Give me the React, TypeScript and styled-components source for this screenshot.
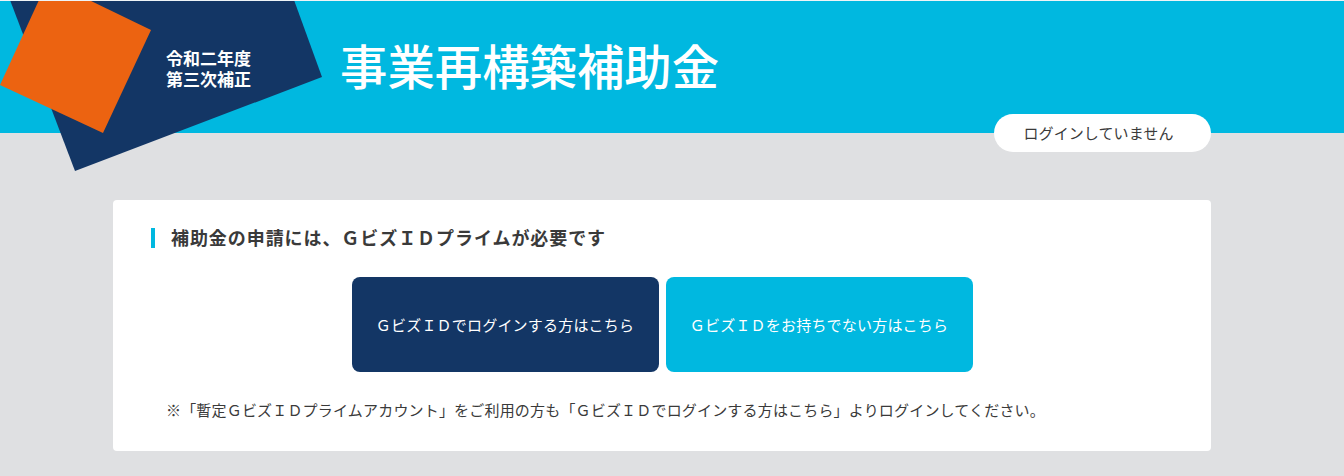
import React, { FC } from 'react';
import styled, { createGlobalStyle } from 'styled-components';

const GlobalStyle = createGlobalStyle`
  html, body {
    margin: 0;
    padding: 0;
    background: #dfe0e2;
  }

  body {
    font-family: "Noto Sans CJK JP", "Noto Sans", sans-serif;
    color: #3a3a3a;
  }
`;

const Page = styled.div`
  width: 1344px;
  height: 476px;
  box-sizing: border-box;
  border-top: 1px solid #eef4f7;
  overflow: hidden;
`;

const Header = styled.header`
  position: relative;
  height: 132px;
  box-sizing: border-box;
  padding-left: 166px;
  display: flex;
  align-items: center;
  background: #00b8e0;
`;

const Emblem = styled.svg`
  position: absolute;
  left: 0;
  top: 0;
`;

const Period = styled.div`
  position: relative;
  width: 174px;
  flex: none;
  margin-top: 1px;
  font-size: 17px;
  line-height: 21px;
  font-weight: 700;
  color: #fff;
`;

const Title = styled.h1`
  margin: 0 0 4px;
  font-size: 47.4px;
  line-height: 1;
  font-weight: 500;
  color: #fff;
  position: relative;
`;

const LoginState = styled.div`
  position: absolute;
  right: 133px;
  top: 113px;
  width: 217px;
  height: 38px;
  box-sizing: border-box;
  padding: 0 8px 2px 0;
  display: flex;
  align-items: center;
  justify-content: center;
  border-radius: 19px;
  background: #fff;
  font-size: 15px;
  letter-spacing: 0.1px;
  color: #3a3a3a;
`;

const Main = styled.main`
  padding: 67px 133px 0 113px;
`;

const Card = styled.section`
  height: 251px;
  box-sizing: border-box;
  padding: 28px 38px 0;
  border-radius: 4px;
  background: #fff;
`;

const Heading = styled.h2`
  margin: 0;
  padding: 0 0 2px 16px;
  height: 20px;
  box-sizing: border-box;
  border-left: 4px solid #00b8e0;
  font-size: 18px;
  line-height: 18px;
  font-weight: 700;
  letter-spacing: 0.93px;
  color: #3a3a3a;
`;

const Actions = styled.div`
  margin-top: 29px;
  display: flex;
  justify-content: center;
  gap: 7px;
`;

const ActionButton = styled.a<{ $primary?: boolean }>`
  width: 307px;
  height: 95px;
  display: flex;
  align-items: center;
  justify-content: center;
  border-radius: 8px;
  background: ${({ $primary }) => ($primary ? '#133665' : '#00b8e0')};
  font-size: 15px;
  letter-spacing: 0.2px;
  color: #fff;
`;

const Note = styled.p`
  margin: 28px 0 0 15px;
  font-size: 15px;
  line-height: 20px;
  letter-spacing: 0.18px;
  white-space: nowrap;
  color: #3a3a3a;
`;

const App: FC = () => (
  <Page>
    <GlobalStyle />
    <Header>
      <Emblem width="323" height="171" viewBox="0 1 323 171">
        <polygon points="10,0 294,0 322,77 75,171" fill="#133665" />
        <polygon points="39,0 89,0 151,30 103,133 0,85" fill="#ec6311" />
      </Emblem>
      <Period>
        令和二年度
        <br />
        第三次補正
      </Period>
      <Title>事業再構築補助金</Title>
      <LoginState>ログインしていません</LoginState>
    </Header>
    <Main>
      <Card>
        <Heading>補助金の申請には、ＧビズＩＤプライムが必要です</Heading>
        <Actions>
          <ActionButton $primary>ＧビズＩＤでログインする方はこちら</ActionButton>
          <ActionButton>ＧビズＩＤをお持ちでない方はこちら</ActionButton>
        </Actions>
        <Note>
          ※「暫定ＧビズＩＤプライムアカウント」をご利用の方も「ＧビズＩＤでログインする方はこちら」よりログインしてください。
        </Note>
      </Card>
    </Main>
  </Page>
);

export default App;
